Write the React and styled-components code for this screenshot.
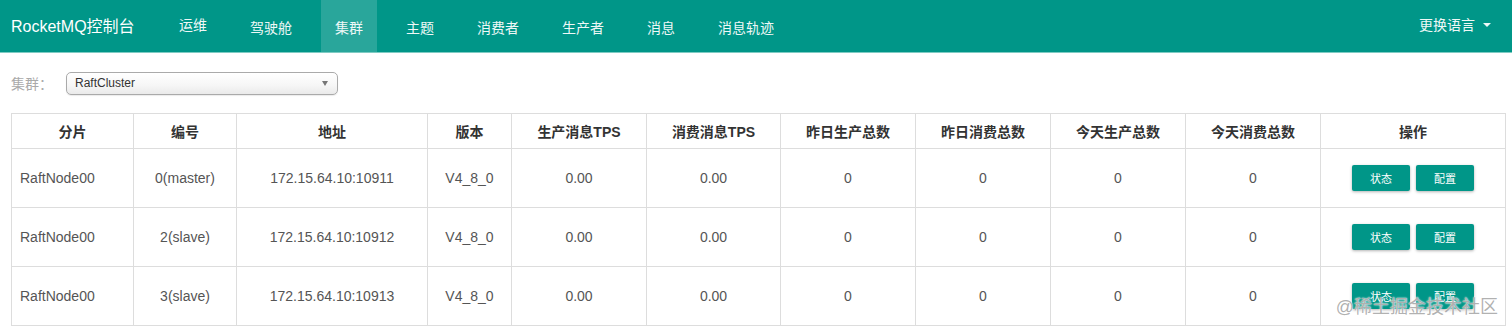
import React from 'react'
import styled, { createGlobalStyle } from 'styled-components'

const GlobalStyle = createGlobalStyle`
  html, body {
    margin: 0;
    padding: 0;
    background: #fff;
    font-family: "Liberation Sans", "Noto Sans CJK SC", sans-serif;
  }
`

const navItems = ['运维', '驾驶舱', '集群', '主题', '消费者', '生产者', '消息', '消息轨迹']

const columns = [
  { title: '分片', width: 122 },
  { title: '编号', width: 103 },
  { title: '地址', width: 191 },
  { title: '版本', width: 84 },
  { title: '生产消息TPS', width: 135 },
  { title: '消费消息TPS', width: 134 },
  { title: '昨日生产总数', width: 135 },
  { title: '昨日消费总数', width: 135 },
  { title: '今天生产总数', width: 135 },
  { title: '今天消费总数', width: 135 },
  { title: '操作', width: 185 },
]

const brokers = [
  { name: 'RaftNode00', id: '0(master)', addr: '172.15.64.10:10911' },
  { name: 'RaftNode00', id: '2(slave)', addr: '172.15.64.10:10912' },
  { name: 'RaftNode00', id: '3(slave)', addr: '172.15.64.10:10913' },
]

export default function App() {
  return (
    <Page>
      <GlobalStyle />
      <NavBar>
        <Brand>RocketMQ控制台</Brand>
        <NavList>
          {navItems.map((item, i) => (
            <NavItem key={item} active={item === '集群'} raised={i === 0}>
              {item}
            </NavItem>
          ))}
        </NavList>
        <LangMenu>
          更换语言<Caret />
        </LangMenu>
      </NavBar>

      <Content>
        <FilterRow>
          <FilterLabel>集群：</FilterLabel>
          <Select>
            <span>RaftCluster</span>
            <SelectArrow />
          </Select>
        </FilterRow>

        <Table>
          <colgroup>
            {columns.map(c => (
              <col key={c.title} style={{ width: c.width }} />
            ))}
          </colgroup>
          <thead>
            <tr>
              {columns.map(c => (
                <Th key={c.title}>{c.title}</Th>
              ))}
            </tr>
          </thead>
          <tbody>
            {brokers.map(b => (
              <tr key={b.addr}>
                <Td left>{b.name}</Td>
                <Td>{b.id}</Td>
                <Td>{b.addr}</Td>
                <Td>V4_8_0</Td>
                <Td>0.00</Td>
                <Td>0.00</Td>
                <Td>0</Td>
                <Td>0</Td>
                <Td>0</Td>
                <Td>0</Td>
                <Td>
                  <Actions>
                    <ActionButton>状态</ActionButton>
                    <ActionButton>配置</ActionButton>
                  </Actions>
                </Td>
              </tr>
            ))}
          </tbody>
        </Table>
      </Content>

      <Watermark>@稀土掘金技术社区</Watermark>
    </Page>
  )
}

const Page = styled.div`
  position: relative;
  width: 1512px;
  height: 331px;
  overflow: hidden;
`

const NavBar = styled.header`
  display: flex;
  align-items: stretch;
  height: 52px;
  background: #009688;
  border-bottom: 1px solid #7fcbc3;
  color: #fff;
`

const Brand = styled.div`
  display: flex;
  align-items: center;
  padding: 0 0 3px 11px;
  font-size: 16px;
  width: 165px;
  box-sizing: border-box;
  color: #fff;
`

const NavList = styled.nav`
  display: flex;
  align-items: stretch;
  gap: 15px;
  flex: 1;
`

const NavItem = styled.div`
  display: flex;
  align-items: center;
  padding: ${p => (p.raised ? '0 14px 4px' : '1px 14px 0')};
  font-size: 14px;
  color: #eef8f7;
  background: ${p => (p.active ? 'rgba(255,255,255,0.16)' : 'transparent')};
`

const LangMenu = styled.div`
  display: flex;
  align-items: center;
  padding: 0 21px 5px 0;
  font-size: 14px;
  color: #eef8f7;
`

const Caret = styled.span`
  display: inline-block;
  margin-left: 8px;
  margin-top: 2px;
  width: 0;
  height: 0;
  border-left: 4px solid transparent;
  border-right: 4px solid transparent;
  border-top: 4px solid #eef8f7;
`

const Content = styled.main`
  padding: 19px 7px 0 11px;
`

const FilterRow = styled.div`
  display: flex;
  align-items: center;
  height: 22px;
`

const FilterLabel = styled.label`
  width: 55px;
  font-size: 14px;
  color: #aaa;
`

const Select = styled.div`
  display: flex;
  align-items: center;
  justify-content: space-between;
  box-sizing: border-box;
  width: 272px;
  height: 23px;
  padding: 0 9px 0 8px;
  border: 1px solid #aaa;
  border-radius: 5px;
  background: linear-gradient(#fff 0%, #f6f6f6 60%, #eaeaea 100%);
  box-shadow: 0 1px 1px rgba(0, 0, 0, 0.08);
  font-size: 12px;
  color: #333;
`

const SelectArrow = styled.span`
  width: 0;
  height: 0;
  border-left: 3px solid transparent;
  border-right: 3px solid transparent;
  border-top: 5px solid #777;
`

const Table = styled.table`
  margin-top: 19px;
  width: 1494px;
  table-layout: fixed;
  border-collapse: collapse;
  font-size: 14px;
`

const Th = styled.th`
  height: 34px;
  padding: 0 8px;
  border: 1px solid #ddd;
  font-weight: bold;
  color: #333;
  text-align: center;
  vertical-align: middle;
`

const Td = styled.td`
  height: 58px;
  padding: 0 8px;
  border: 1px solid #ddd;
  color: #555;
  text-align: ${p => (p.left ? 'left' : 'center')};
  vertical-align: middle;
  white-space: nowrap;
`

const Actions = styled.div`
  display: flex;
  justify-content: center;
  gap: 6px;
`

const ActionButton = styled.button`
  width: 58px;
  height: 26px;
  border: none;
  border-radius: 2px;
  background: #009688;
  color: #fff;
  font-family: "Liberation Sans", "Noto Sans CJK SC", sans-serif;
  font-size: 11px;
  box-shadow: 0 1px 3px rgba(0, 0, 0, 0.3);
  cursor: pointer;
`

const Watermark = styled.div`
  position: absolute;
  right: 14px;
  bottom: 13px;
  font-size: 18px;
  color: rgba(110, 110, 110, 0.55);
  text-shadow: 0 0 1px #fff, 0 0 2px #fff;
  pointer-events: none;
`
